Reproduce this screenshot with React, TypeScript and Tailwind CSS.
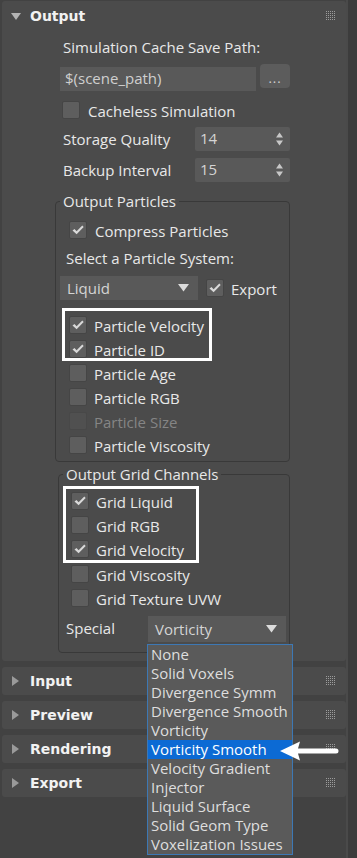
import React from "react";

const Grip = () => (
  <svg width="10" height="10" viewBox="0 0 10 10" className="shrink-0">
    {[0, 2, 4, 6, 8].map((y) =>
      [0, 2, 4, 6, 8].map((x) => (
        <rect key={`${x}-${y}`} x={x} y={y} width="1" height="1" fill="#9c9c9c" />
      ))
    )}
  </svg>
);

const Check = ({ on = false, dim = false }: { on?: boolean; dim?: boolean }) => (
  <div
    className={`w-[18px] h-[18px] shrink-0 rounded-[2px] border flex items-center justify-center ${
      dim ? "bg-[#505050] border-[#484848]" : "bg-[#5e5e5e] border-[#454545]"
    }`}
  >
    {on && (
      <svg width="14" height="14" viewBox="0 0 14 14">
        <path d="M1.5 7.6 L3.5 6 L5.6 8.3 L11.3 2.6 L12.7 4 L5.6 11.3 Z" fill="#d9d9d9" />
      </svg>
    )}
  </div>
);

const CheckRow = ({
  label,
  on = false,
  dim = false,
  className = "",
  textClass = "",
}: {
  label: string;
  on?: boolean;
  dim?: boolean;
  className?: string;
  textClass?: string;
}) => (
  <div className={`flex items-center h-[18px] gap-[7px] ${className}`}>
    <Check on={on} dim={dim} />
    <span
      className={`relative top-[1px] leading-[18px] whitespace-nowrap ${
        dim ? "text-[#858585]" : "text-[#e8e8e8]"
      } ${textClass}`}
    >
      {label}
    </span>
  </div>
);

const DownTri = () => (
  <svg width="11" height="8" viewBox="0 0 11 8">
    <path d="M0 0 H11 L5.5 7.5 Z" fill="#dcdcdc" />
  </svg>
);

const Spinner = ({ value }: { value: string }) => (
  <div className="w-[95px] h-[24px] bg-[#595959] rounded-[2px] flex items-center justify-between pl-[5px] pr-[7px]">
    <span className="text-[#d4d4d4] leading-[20px] -mt-[3px]">{value}</span>
    <svg width="7" height="14" viewBox="0 0 7 14">
      <path d="M0 5.5 L3.5 0.5 L7 5.5 Z" fill="#c8c8c8" />
      <path d="M0 8.5 L3.5 13.5 L7 8.5 Z" fill="#c8c8c8" />
    </svg>
  </div>
);

const Collapsed = ({ title }: { title: string }) => (
  <div className="h-[28px] mt-[6px] rounded-[3px] bg-[#4b4b4b] flex items-center pr-[10px]">
    <svg width="8" height="10" viewBox="0 0 8 10" className="ml-[10px]">
      <path d="M0 0 L7 5 L0 10 Z" fill="#9a9a9a" />
    </svg>
    <span className="ml-[10px] font-['DejaVu_Sans',sans-serif] font-bold text-[14px] text-[#f2f2f2] flex-1">
      {title}
    </span>
    <Grip />
  </div>
);

const specials = [
  "None",
  "Solid Voxels",
  "Divergence Symm",
  "Divergence Smooth",
  "Vorticity",
  "Vorticity Smooth",
  "Velocity Gradient",
  "Injector",
  "Liquid Surface",
  "Solid Geom Type",
  "Voxelization Issues",
];

export default function App() {
  return (
    <div className="relative w-[357px] h-[858px] overflow-hidden bg-[#424242] flex font-['Open_Sans',sans-serif] text-[15px]">
      {/* Rollouts column */}
      <div className="w-[346px] pl-[2px] pt-[1px] flex flex-col">
        {/* Output rollout */}
        <div className="h-[660px] rounded-[3px] bg-[#4b4b4b] flex flex-col">
          <div className="h-[30px] flex items-center pr-[10px] shrink-0">
            <svg width="10" height="7" viewBox="0 0 10 7" className="ml-[9px]">
              <path d="M0 0 H10 L5 7 Z" fill="#b4b4b4" />
            </svg>
            <span className="ml-[9px] font-['DejaVu_Sans',sans-serif] font-bold text-[14px] text-[#f2f2f2] flex-1">
              Output
            </span>
            <Grip />
          </div>

          <div className="mt-[6px] ml-[61px] h-[20px] leading-[20px] text-[#e8e8e8]">
            Simulation Cache Save Path:
          </div>

          <div className="mt-[7px] ml-[58px] h-[27px] flex items-start">
            <div className="mt-[3px] w-[196px] h-[24px] bg-[#595959] flex items-center pl-[5px]">
              <span className="text-[#cfcfcf] leading-[20px] -mt-[2px]">$(scene_path)</span>
            </div>
            <div className="ml-[4px] w-[30px] h-[24px] rounded-[4px] bg-[#5c5c5c] flex items-end justify-center pb-[5px]">
              <span className="text-[#d0d0d0] text-[13px] leading-[10px] tracking-[1px]">...</span>
            </div>
          </div>

          <CheckRow label="Cacheless Simulation" className="mt-[10px] ml-[60px] gap-[8px]" />

          <div className="mt-[8px] ml-[61px] h-[24px] flex items-center">
            <span className="w-[132px] text-[#e8e8e8] leading-[20px]">Storage Quality</span>
            <Spinner value="14" />
          </div>
          <div className="mt-[7px] ml-[61px] h-[24px] flex items-center">
            <span className="w-[132px] text-[#e8e8e8] leading-[20px]">Backup Interval</span>
            <Spinner value="15" />
          </div>

          {/* Output Particles group */}
          <div className="relative mt-[19px] ml-[53px] w-[235px] h-[261px] rounded-[4px] border border-[#393939] flex flex-col">
            <span className="absolute left-[4px] -top-[11px] h-[20px] leading-[20px] px-[3px] bg-[#4b4b4b] text-[#e8e8e8]">
              Output Particles
            </span>
            <CheckRow label="Compress Particles" on className="mt-[19px] ml-[13px] gap-[8px]" />
            <div className="mt-[9px] ml-[10px] h-[20px] leading-[20px] text-[#e8e8e8]">
              Select a Particle System:
            </div>
            <div className="mt-[8px] ml-[4px] h-[24px] flex items-center">
              <div className="w-[138px] h-[24px] bg-[#595959] flex items-center justify-between pl-[7px] pr-[9px]">
                <span className="text-[#d4d4d4] leading-[20px]">Liquid</span>
                <DownTri />
              </div>
              <CheckRow label="Export" on className="ml-[8px]" />
            </div>
            <div className="mt-[8px] ml-[6px] w-[150px] h-[53px] border-[3px] border-white flex flex-col gap-[6px] pt-[5px] pl-[4px]">
              <CheckRow label="Particle Velocity" on />
              <CheckRow label="Particle ID" on />
            </div>
            <div className="mt-[3px] ml-[13px] flex flex-col gap-[6px]">
              <CheckRow label="Particle Age" />
              <CheckRow label="Particle RGB" />
              <CheckRow label="Particle Size" dim />
              <CheckRow label="Particle Viscosity" />
            </div>
          </div>

          {/* Output Grid Channels group */}
          <div className="relative mt-[12px] ml-[56px] w-[232px] h-[179px] rounded-[4px] border border-[#393939] flex flex-col">
            <span className="absolute left-[4px] -top-[11px] h-[20px] leading-[20px] px-[3px] bg-[#4b4b4b] text-[#e8e8e8]">
              Output Grid Channels
            </span>
            <div className="mt-[11px] ml-[4px] w-[136px] h-[77px] border-[3px] border-white flex flex-col gap-[6px] pt-[3px] pl-[5px]">
              <CheckRow label="Grid Liquid" on />
              <CheckRow label="Grid RGB" />
              <CheckRow label="Grid Velocity" on />
            </div>
            <div className="mt-[2px] ml-[12px] flex flex-col gap-[6px]">
              <CheckRow label="Grid Viscosity" />
              <CheckRow label="Grid Texture UVW" textClass="w-[127px] overflow-hidden" />
            </div>
            <div className="mt-[9px] ml-[7px] h-[26px] flex items-center">
              <span className="w-[82px] text-[#e8e8e8] leading-[20px] -mt-[3px]">Special</span>
              <div className="w-[138px] h-[26px] bg-[#595959] flex items-center justify-between pl-[7px] pr-[9px]">
                <span className="text-[#d4d4d4] leading-[20px]">Vorticity</span>
                <DownTri />
              </div>
            </div>
          </div>
        </div>

        <Collapsed title="Input" />
        <Collapsed title="Preview" />
        <Collapsed title="Rendering" />
        <Collapsed title="Export" />
      </div>

      {/* Scroll strip */}
      <div className="w-[11px] border-l-[2px] border-[#4a4a4a] bg-[#3c3c3c]" />

      {/* Open dropdown list */}
      <div className="absolute left-[147px] top-[644px] w-[146px] border border-[#3d78b4] bg-[#5a5a5a] flex flex-col">
        {specials.map((s) => (
          <div
            key={s}
            className={`h-[19px] leading-[19px] pl-[3px] whitespace-nowrap ${
              s === "Vorticity Smooth" ? "bg-[#0c6ad4] text-white" : "text-[#dedede]"
            }`}
          >
            {s}
          </div>
        ))}
      </div>

      {/* Annotation arrow */}
      <svg className="absolute left-[279px] top-[740px]" width="62" height="22" viewBox="0 0 62 22">
        <path d="M1 11 L21 1.5 L19 8.5 L57 8.5 A2.5 2.5 0 0 1 57 13.5 L19 13.5 L21 20.5 Z" fill="#ffffff" />
      </svg>
    </div>
  );
}
